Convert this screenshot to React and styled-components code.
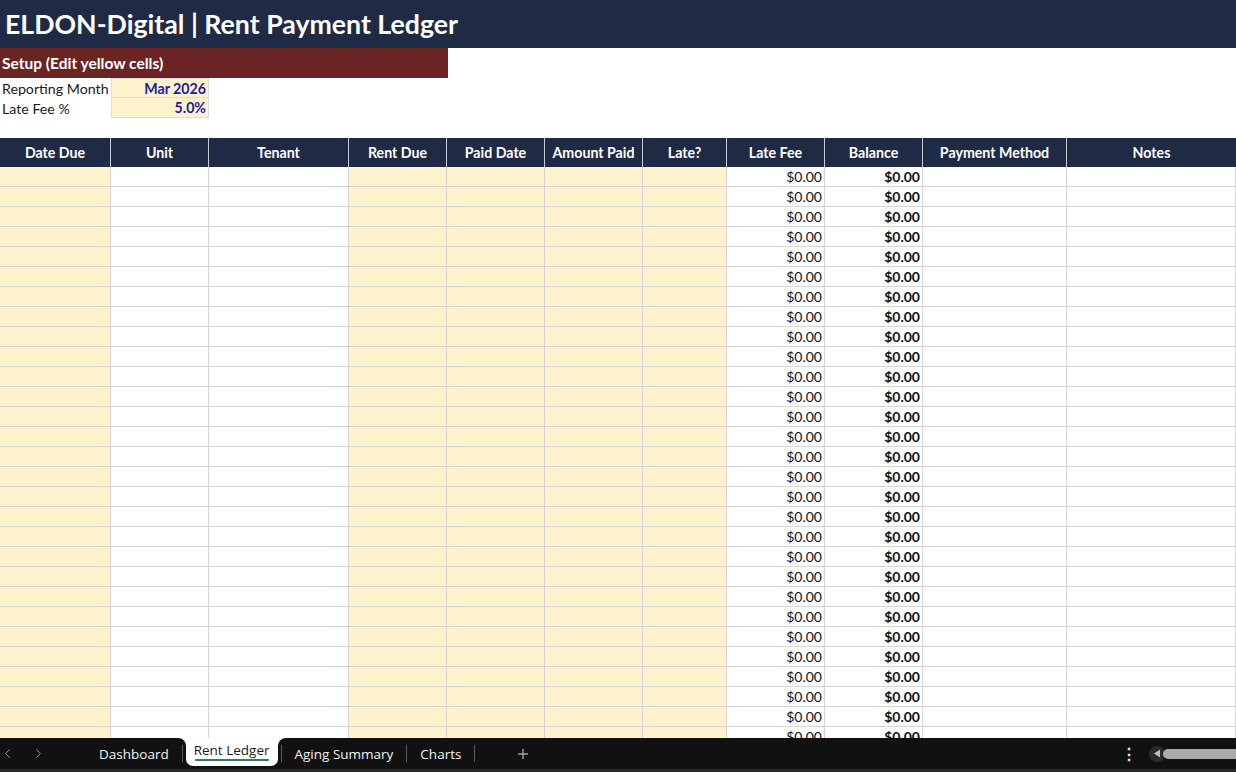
import React from "react";
import styled, { createGlobalStyle } from "styled-components";
import { ChevronLeft, ChevronRight, Plus } from "lucide-react";

const GlobalStyle = createGlobalStyle`
  html, body {
    margin: 0;
    padding: 0;
    background: #ffffff;
    overflow: hidden;
  }
  body {
    font-family: Lato, "Liberation Sans", sans-serif;
    color: #1a1a1a;
  }
`;

const COLUMNS = [
  { name: "Date Due", width: 111, fill: true },
  { name: "Unit", width: 98 },
  { name: "Tenant", width: 140 },
  { name: "Rent Due", width: 98, fill: true },
  { name: "Paid Date", width: 98, fill: true },
  { name: "Amount Paid", width: 98, fill: true },
  { name: "Late?", width: 84, fill: true },
  { name: "Late Fee", width: 98, value: "$0.00" },
  { name: "Balance", width: 98, value: "$0.00", bold: true },
  { name: "Payment Method", width: 144 },
  { name: "Notes", width: 169 },
];

const TEMPLATE = COLUMNS.map((c) => `${c.width}px`).join(" ");
const ROWS = Array.from({ length: 29 }, (_, i) => i);
const TABS = ["Dashboard", "Rent Ledger", "Aging Summary", "Charts"];

const Page = styled.div`
  width: 1236px;
  height: 772px;
  display: flex;
  flex-direction: column;
  overflow: hidden;
`;

const TitleBar = styled.div`
  height: 48px;
  flex: none;
  background: #1f2a44;
  color: #ffffff;
  display: flex;
  align-items: center;
  padding-left: 5px;
  font-size: 26.7px;
  font-weight: 700;
`;

const SetupHeader = styled.div`
  width: 446px;
  height: 30px;
  flex: none;
  background: #6b2424;
  color: #ffffff;
  display: flex;
  align-items: center;
  padding-left: 2px;
  font-size: 15.5px;
  font-weight: 700;
`;

const SetupRow = styled.div`
  display: grid;
  grid-template-columns: 111px 98px;
  height: 20px;
  flex: none;
`;

const SetupLabel = styled.div`
  display: flex;
  align-items: center;
  padding-left: 2px;
  font-size: 14.2px;
  color: #1a1a1a;
`;

const SetupValue = styled.div`
  display: flex;
  align-items: center;
  justify-content: flex-end;
  padding-right: 2px;
  background: #fff2cc;
  border: 1px solid #dcdcdc;
  border-top: ${(p) => (p.$first ? "1px solid #dcdcdc" : "none")};
  box-sizing: border-box;
  font-size: 14.2px;
  font-weight: 700;
  color: #1c1ca0;
`;

const Spacer = styled.div`
  height: 20px;
  flex: none;
`;

const Sheet = styled.div`
  flex: 1;
  overflow: hidden;
`;

const HeadRow = styled.div`
  display: grid;
  grid-template-columns: ${TEMPLATE};
  height: 29px;
  background: #1f2a44;
`;

const HeadCell = styled.div`
  display: flex;
  align-items: center;
  justify-content: center;
  color: #ffffff;
  font-size: 14.2px;
  font-weight: 700;
  border-right: ${(p) => (p.$last ? "none" : "1px solid #c9ccd3")};
`;

const BodyRow = styled.div`
  display: grid;
  grid-template-columns: ${TEMPLATE};
  height: 20px;
`;

const Cell = styled.div`
  display: flex;
  align-items: center;
  justify-content: flex-end;
  padding-right: 2px;
  box-sizing: border-box;
  background: ${(p) => (p.$fill ? "#fff2cc" : "#ffffff")};
  border-right: 1px solid #d4d4d4;
  border-bottom: 1px solid #d4d4d4;
  font-size: 14px;
  font-weight: ${(p) => (p.$bold ? 700 : 400)};
  color: #111111;
`;

const TabBar = styled.div`
  height: 31px;
  flex: none;
  background: #111111;
  border-bottom: 3px solid #2a2a2a;
  display: flex;
  align-items: stretch;
  font-family: "Open Sans", "Noto Sans", sans-serif;
  font-size: 13.5px;
  color: #f2f2f2;
`;

const NavGroup = styled.div`
  display: flex;
  align-items: center;
  gap: 16px;
  padding-left: 0;
  width: 86px;
  color: #a0a0a0;
`;

const Tab = styled.div`
  position: relative;
  display: flex;
  align-items: center;
  padding: 0 ${(p) => (p.$active ? "8px" : "13px")};
  margin: 0 ${(p) => (p.$active ? "3px" : "0")};
  background: ${(p) => (p.$active ? "#ffffff" : "transparent")};
  color: ${(p) => (p.$active ? "#1a1a1a" : "#f2f2f2")};
  border-radius: ${(p) => (p.$active ? "0 0 7px 7px" : "0")};
  height: ${(p) => (p.$active ? "28px" : "auto")};
  padding-bottom: ${(p) => (p.$active ? "4px" : "0")};
  box-sizing: border-box;

  ${(p) =>
    p.$active &&
    `
    &::before, &::after {
      content: "";
      position: absolute;
      top: 0;
      width: 8px;
      height: 8px;
      overflow: hidden;
    }
    &::before {
      left: -8px;
      border-top-right-radius: 8px;
      box-shadow: 4px -4px 0 4px #ffffff;
    }
    &::after {
      right: -8px;
      border-top-left-radius: 8px;
      box-shadow: -4px -4px 0 4px #ffffff;
    }
  `}
`;

const Underline = styled.span`
  position: absolute;
  left: 9px;
  right: 9px;
  bottom: 5px;
  height: 2px;
  background: #2e7d5b;
  border-radius: 1px;
`;

const Separator = styled.div`
  align-self: center;
  width: 1px;
  height: 17px;
  background: #5a5a5a;
`;

const AddTab = styled.div`
  display: flex;
  align-items: center;
  margin-left: 40px;
  color: #d8d8d8;
`;

const MoreDots = styled.div`
  margin-left: auto;
  display: flex;
  align-items: center;
  font-size: 16px;
  font-weight: 700;
  color: #e0e0e0;
  padding-right: 12px;
`;

const ScrollArea = styled.div`
  display: flex;
  align-items: center;
  width: 87px;
`;

const ScrollButton = styled.div`
  width: 16px;
  height: 16px;
  border-radius: 50%;
  background: #2c2c2c;
  display: flex;
  align-items: center;
  justify-content: center;
  flex: none;
`;

const Thumb = styled.div`
  flex: 1;
  height: 10px;
  margin-left: -2px;
  border-radius: 5px 0 0 5px;
  background: #a9a9a9;
`;

export default function App() {
  return (
    <Page>
      <GlobalStyle />
      <TitleBar>ELDON-Digital | Rent Payment Ledger</TitleBar>
      <SetupHeader>Setup (Edit yellow cells)</SetupHeader>
      <SetupRow>
        <SetupLabel>Reporting Month</SetupLabel>
        <SetupValue $first>Mar 2026</SetupValue>
      </SetupRow>
      <SetupRow>
        <SetupLabel>Late Fee %</SetupLabel>
        <SetupValue>5.0%</SetupValue>
      </SetupRow>
      <Spacer />
      <Sheet>
        <HeadRow>
          {COLUMNS.map((c, i) => (
            <HeadCell key={c.name} $last={i === COLUMNS.length - 1}>
              {c.name}
            </HeadCell>
          ))}
        </HeadRow>
        {ROWS.map((r) => (
          <BodyRow key={r}>
            {COLUMNS.map((c) => (
              <Cell key={c.name} $fill={c.fill} $bold={c.bold}>
                {c.value || ""}
              </Cell>
            ))}
          </BodyRow>
        ))}
      </Sheet>
      <TabBar>
        <NavGroup>
          <ChevronLeft size={15} strokeWidth={1.5} />
          <ChevronRight size={15} strokeWidth={1.5} />
        </NavGroup>
        {TABS.map((t, i) => (
          <React.Fragment key={t}>
            {i > 0 && <Separator />}
            <Tab $active={t === "Rent Ledger"}>
              {t}
              {t === "Rent Ledger" && <Underline />}
            </Tab>
          </React.Fragment>
        ))}
        <Separator />
        <AddTab>
          <Plus size={16} strokeWidth={1.5} />
        </AddTab>
        <MoreDots>⋮</MoreDots>
        <ScrollArea>
          <ScrollButton>
            <svg width="8" height="9" viewBox="0 0 8 9">
              <path d="M7 0.5 L1 4.5 L7 8.5 Z" fill="#bdbdbd" />
            </svg>
          </ScrollButton>
          <Thumb />
        </ScrollArea>
      </TabBar>
    </Page>
  );
}
